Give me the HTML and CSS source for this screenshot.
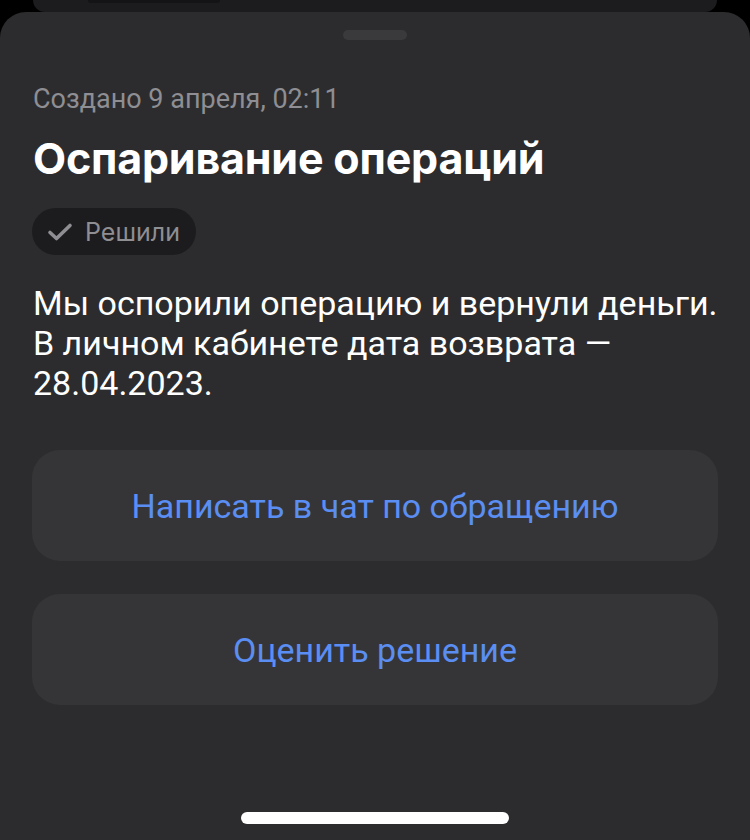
FILE: index.html
```html
<!DOCTYPE html>
<html lang="ru">
<head>
<meta charset="utf-8">
<link rel="stylesheet" href="styles.css">
</head>
<body>
<div class="backdrop">
  <div class="behind-card"><div class="behind-btn"></div></div>
</div>
<div class="sheet">
  <div class="handle"></div>
  <div class="content">
    <div class="created">Создано 9 апреля, 02:11</div>
    <h1 class="title">Оспаривание операций</h1>
    <div class="badge">
      <svg class="check" width="26" height="20" viewBox="0 0 26 20"><path d="M3 10.5 L9.5 16.5 L23 3.5" fill="none" stroke="#8e8e93" stroke-width="3.6" stroke-linecap="round" stroke-linejoin="round"/></svg>
      <span>Решили</span>
    </div>
    <p class="desc">Мы оспорили операцию и вернули деньги.<br>В личном кабинете дата возврата —<br>28.04.2023.</p>
    <div class="actions">
      <div class="btn">Написать в чат по обращению</div>
      <div class="btn">Оценить решение</div>
    </div>
  </div>
  <div class="home-indicator"></div>
</div>
</body>
</html>
```
FILE: styles.css
```css
html, body {
  margin: 0;
  padding: 0;
  width: 750px;
  height: 840px;
  overflow: hidden;
  background: #000;
}
body {
  position: relative;
  font-family: Roboto, "Liberation Sans", sans-serif;
}
.backdrop {
  height: 12px;
  display: flex;
  justify-content: center;
}
.behind-card {
  width: 684px;
  height: 12px;
  background: #1c1c1e;
  border-radius: 0 0 18px 18px;
  position: relative;
}
.behind-btn {
  position: absolute;
  left: 55px;
  top: 0;
  width: 132px;
  height: 3px;
  background: #141416;
  border-radius: 0 0 4px 4px;
}
.sheet {
  height: 828px;
  background: #2c2c2e;
  border-radius: 26px 26px 0 0;
  display: flex;
  flex-direction: column;
  align-items: center;
}
.handle {
  margin-top: 18px;
  width: 64px;
  height: 10px;
  border-radius: 5px;
  background: #3a3a3c;
}
.content {
  align-self: stretch;
  padding: 0 32px 0 33px;
  flex: 1;
}
.created {
  margin-top: 43px;
  font-size: 27px;
  line-height: 32px;
  color: #8e8e93;
}
.title {
  margin: 19px 0 0;
  font-family: Inter, "Noto Sans", sans-serif;
  font-weight: 700;
  font-size: 43px;
  line-height: 48px;
  color: #fff;
  letter-spacing: -0.2px;
}
.badge {
  margin-top: 26px;
  margin-left: -1px;
  display: inline-flex;
  align-items: center;
  gap: 12px;
  height: 47px;
  padding: 0 16px 0 15px;
  border-radius: 24px;
  background: #1c1c1e;
  color: #8e8e93;
  font-family: Inter, "Noto Sans", sans-serif;
  font-size: 25px;
}
.check { display: block; }
.desc {
  margin: 28px 0 0;
  font-size: 34px;
  line-height: 40px;
  color: #fff;
}
.actions {
  margin-top: 47px;
  margin-left: -1px;
  display: flex;
  flex-direction: column;
  gap: 33px;
}
.btn {
  height: 111px;
  border-radius: 28px;
  background: #353537;
  color: #5b8ef2;
  font-size: 34px;
  display: flex;
  align-items: center;
  justify-content: center;
}
.home-indicator {
  margin-bottom: 16px;
  width: 268px;
  height: 12px;
  border-radius: 6px;
  background: #fff;
}
```
